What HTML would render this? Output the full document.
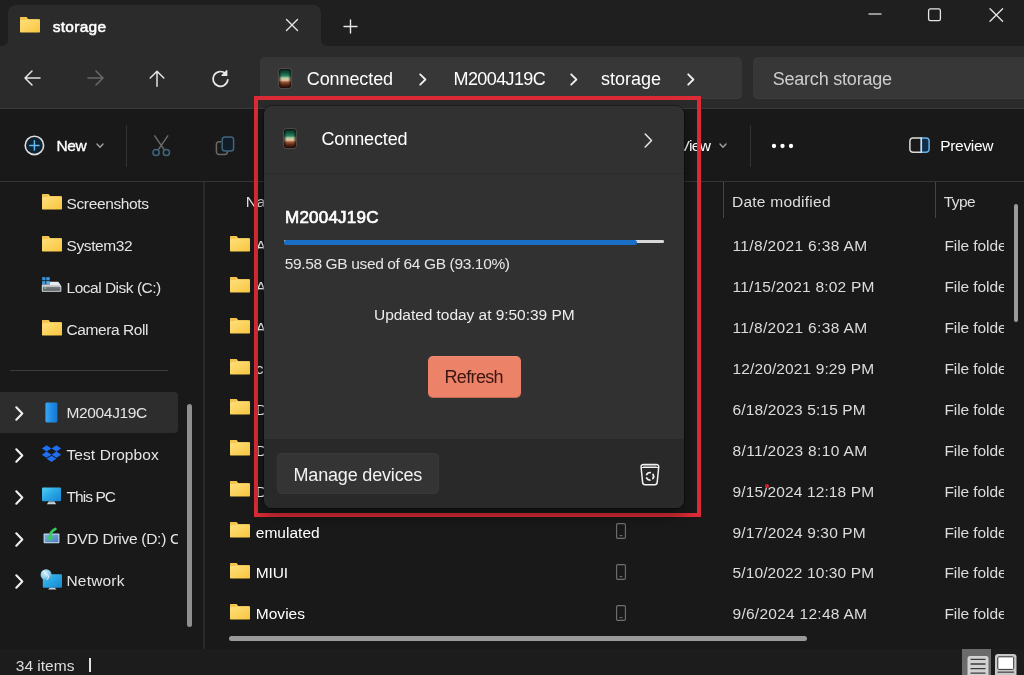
<!DOCTYPE html>
<html lang="en"><head><meta charset="utf-8"><title>storage - File Explorer</title>
<style>
html,body{margin:0;padding:0;background:#191919;}
body{width:1024px;height:675px;overflow:hidden;position:relative;font-family:"Liberation Sans",Arial,sans-serif;}
#w{will-change:transform;position:absolute;left:0;top:0;width:1024px;height:675px;overflow:hidden;background:#191919;}
.t{position:absolute;white-space:nowrap;line-height:24px;height:24px;}
.b{position:absolute;}
.i{position:absolute;overflow:visible;}
</style></head><body><div id="w">

<div class="b" style="left:0;top:0;width:1024px;height:46px;background:#1f1f1f"></div>
<div class="b" style="left:8px;top:5px;width:313px;height:42px;background:#2b2b2b;border-radius:8px 8px 0 0"></div>
<svg class="i" style="left:2px;top:40px" width="6" height="6"><path d="M0 6H6V0A6 6 0 0 1 0 6z" fill="#2b2b2b"/></svg>
<svg class="i" style="left:321px;top:40px" width="6" height="6"><path d="M6 6H0V0A6 6 0 0 0 6 6z" fill="#2b2b2b"/></svg>
<div class="b" style="left:0;top:46px;width:1024px;height:62px;background:#2b2b2b"></div>
<div class="b" style="left:0;top:108px;width:1024px;height:1.8px;background:#3a3a3a"></div>
<div class="b" style="left:0;top:109px;width:1024px;height:72px;background:#191919"></div>
<div class="b" style="left:0;top:180.5px;width:1024px;height:1.6px;background:#353535"></div>
<div class="b" style="left:0;top:649px;width:1024px;height:26px;background:#1c1c1c"></div>
<svg class="i" style="left:19.5px;top:17px" width="20" height="15.6" viewBox="0 0 20 15.6"><defs><linearGradient id="fg1" x1="0" y1="0" x2="1" y2="1"><stop offset="0" stop-color="#ffe07c"/><stop offset="1" stop-color="#f8c53f"/></linearGradient></defs><path d="M1 0h5.4l2 2.2H19a1 1 0 0 1 1 1V6H0V1a1 1 0 0 1 1-1z" fill="#eeb53a"/><rect x="0" y="2.3" width="20" height="13.3" rx="1.2" fill="url(#fg1)"/><path d="M0 3.4V1a1 1 0 0 1 1-1h5.4l1.1 1.2c-.3.7-.9 1.200-1.700 1.200z" fill="#f3c350"/></svg>
<span class="t" style="left:52.8px;top:14.6px;font-size:15.5px;letter-spacing:0.25px;color:#fff;-webkit-text-stroke:0.55px #fff;">storage</span>
<svg class="i" style="left:285px;top:18px" width="14" height="14" viewBox="0 0 14 14"><path d="M1.5 1.5l11 11M12.5 1.5l-11 11" stroke="#e6e6e6" stroke-width="1.4" fill="none" stroke-linecap="round"/></svg>
<svg class="i" style="left:343px;top:19px" width="15" height="15" viewBox="0 0 15 15"><path d="M7.5 1v13M1 7.5h13" stroke="#e6e6e6" stroke-width="1.4" fill="none" stroke-linecap="round"/></svg>
<svg class="i" style="left:868px;top:8px" width="140" height="14" viewBox="0 0 140 14"><path d="M0.5 6h13" stroke="#e6e6e6" stroke-width="1.2" fill="none"/><rect x="60.6" y="0.9" width="11.8" height="11.8" rx="1.8" stroke="#e6e6e6" stroke-width="1.3" fill="none"/><path d="M122 0.7l12.6 12.6M134.6 0.7L122 13.3" stroke="#e6e6e6" stroke-width="1.3" fill="none" stroke-linecap="round"/></svg>
<svg class="i" style="left:20px;top:66px" width="220" height="24" viewBox="0 0 220 24" fill="none" stroke-linecap="round" stroke-linejoin="round" stroke-width="1.5">
<path d="M5 12h15M12 5l-7 7 7 7" stroke="#e4e4e4"/>
<path d="M68 12h15M76 5l7 7-7 7" stroke="#6a6a6a"/>
<path d="M137 5.200v15M130.200 12l6.800-6.800 6.800 6.800" stroke="#e4e4e4"/>
<path d="M205.600 7.600A7.400 7.400 0 1 0 207.800 13.900" stroke="#e8e8e8" stroke-width="1.700"/><path d="M206.800 4.600v4.800h-4.800z" stroke="#e8e8e8" fill="#e8e8e8" stroke-width="1.200"/>
</svg>
<div class="b" style="left:260px;top:57.3px;width:482px;height:42px;background:#373737;border-radius:5px;box-shadow:inset 0 -1px 0 #3c3c3c"></div>
<div class="b" style="left:753px;top:57.3px;width:290px;height:42px;background:#373737;border-radius:5px;box-shadow:inset 0 -1px 0 #3c3c3c"></div>
<svg class="i" style="left:278px;top:68px" width="14" height="21" viewBox="0 0 14 21"><defs><linearGradient id="ph1" x1="0" y1="0" x2="0" y2="1"><stop offset="0" stop-color="#08261c"/><stop offset="0.2" stop-color="#125a43"/><stop offset="0.36" stop-color="#2f8464"/><stop offset="0.47" stop-color="#bcd0a6"/><stop offset="0.6" stop-color="#e6bf9c"/><stop offset="0.7" stop-color="#9a5638"/><stop offset="0.86" stop-color="#542414"/><stop offset="1" stop-color="#2a100a"/></linearGradient><linearGradient id="pv1" x1="0" y1="0" x2="1" y2="0"><stop offset="0" stop-color="#000" stop-opacity=".55"/><stop offset="0.22" stop-color="#000" stop-opacity="0"/><stop offset="0.78" stop-color="#000" stop-opacity="0"/><stop offset="1" stop-color="#000" stop-opacity=".55"/></linearGradient></defs><rect x="0.400" y="0.400" width="13.200" height="20.200" rx="3.300" fill="#150d0a" stroke="#6e655e" stroke-width=".7"/><rect x="1.400" y="1.400" width="11.200" height="18.200" rx="2.500" fill="url(#ph1)"/><rect x="1.400" y="1.400" width="11.200" height="18.200" rx="2.500" fill="url(#pv1)"/></svg>
<span class="t" style="left:306.8px;top:66.8px;font-size:18px;letter-spacing:-0.10px;color:#fff;">Connected</span>
<svg class="i" style="left:419.4px;top:73px" width="8" height="13" viewBox="0 0 8 13"><path d="M1.2 1.3l5.2 5.2L1.2 11.700" stroke="#f0f0f0" stroke-width="1.800" fill="none" stroke-linecap="round" stroke-linejoin="round"/></svg>
<span class="t" style="left:453.5px;top:66.8px;font-size:18px;letter-spacing:-0.60px;color:#fff;">M2004J19C</span>
<svg class="i" style="left:569.6px;top:73px" width="8" height="13" viewBox="0 0 8 13"><path d="M1.2 1.3l5.2 5.2L1.2 11.700" stroke="#f0f0f0" stroke-width="1.800" fill="none" stroke-linecap="round" stroke-linejoin="round"/></svg>
<span class="t" style="left:601.0px;top:66.8px;font-size:18px;letter-spacing:-0.01px;color:#fff;">storage</span>
<svg class="i" style="left:686.6px;top:73px" width="8" height="13" viewBox="0 0 8 13"><path d="M1.2 1.3l5.2 5.2L1.2 11.700" stroke="#f0f0f0" stroke-width="1.800" fill="none" stroke-linecap="round" stroke-linejoin="round"/></svg>
<span class="t" style="left:772.7px;top:66.8px;font-size:18px;letter-spacing:-0.21px;color:#cdcdcd;">Search storage</span>
<svg class="i" style="left:24px;top:135px" width="22" height="22" viewBox="0 0 22 22" fill="none"><circle cx="10.4" cy="10.4" r="9.2" stroke="#dedede" stroke-width="1.600" fill="#0f2433"/><path d="M10.4 5.8v9.2M5.8 10.4h9.2" stroke="#62b8ee" stroke-width="1.5" stroke-linecap="round"/></svg>
<span class="t" style="left:56.5px;top:134.4px;font-size:15.5px;letter-spacing:-0.45px;color:#fff;-webkit-text-stroke:0.35px #fff;">New</span>
<svg class="i" style="left:95.700px;top:143.400px" width="8" height="6" viewBox="0 0 8 6"><path d="M1 1l3 3.200 3-3.200" stroke="#a2a2a2" stroke-width="1.400" fill="none" stroke-linecap="round" stroke-linejoin="round"/></svg>
<div class="b" style="left:125.500px;top:125px;width:1.500px;height:42px;background:#313131"></div>
<svg class="i" style="left:151px;top:135px" width="21" height="23" viewBox="0 0 21 23" fill="none" stroke-width="1.500" stroke-linecap="round"><path d="M3.700 0.900l9.800 14.300M16.800 0.900L7 15.200" stroke="#6a6a6a"/><circle cx="5.100" cy="17.500" r="3.100" stroke="#466579" fill="#101c25"/><circle cx="15.400" cy="17.500" r="3.100" stroke="#466579" fill="#101c25"/></svg>
<svg class="i" style="left:214.500px;top:135.500px" width="20" height="20" viewBox="0 0 20 20" fill="none" stroke-width="1.500"><path d="M6 5.700H4a2.600 2.600 0 0 0-2.600 2.600V15.800A2.600 2.600 0 0 0 4 18.400h5.800a2.600 2.600 0 0 0 2.600-2.600v-.8" stroke="#6a6a6a"/><rect x="7.200" y="1" width="11.400" height="14" rx="2.800" stroke="#41647c" fill="#111e29"/></svg>
<span class="t" style="left:679.5px;top:134.4px;font-size:15.5px;letter-spacing:-0.61px;color:#fff;">View</span>
<svg class="i" style="left:719px;top:143.400px" width="8" height="6" viewBox="0 0 8 6"><path d="M1 1l3 3.200 3-3.200" stroke="#a2a2a2" stroke-width="1.400" fill="none" stroke-linecap="round" stroke-linejoin="round"/></svg>
<div class="b" style="left:749.500px;top:125px;width:1.500px;height:42px;background:#313131"></div>
<svg class="i" style="left:771px;top:143px" width="24" height="6" viewBox="0 0 24 6"><circle cx="3" cy="3" r="2.150" fill="#fff"/><circle cx="11.500" cy="3" r="2.150" fill="#fff"/><circle cx="20" cy="3" r="2.150" fill="#fff"/></svg>
<svg class="i" style="left:908.600px;top:137.200px" width="22" height="17" viewBox="0 0 22 17" fill="none" stroke-width="1.500"><path d="M12.300 0.900H17A3.100 3.100 0 0 1 20.100 4v8.200a3.100 3.100 0 0 1-3.100 3.100h-4.700z" stroke="#6ab2e6" fill="#0f2e4a"/><path d="M12.300 0.900H4A3.100 3.100 0 0 0 0.900 4v8.200A3.100 3.100 0 0 0 4 15.300h8.300z" stroke="#dcdcdc"/></svg>
<span class="t" style="left:940.3px;top:134.4px;font-size:15.5px;letter-spacing:-0.34px;color:#fff;">Preview</span>
<div class="b" style="left:202.6px;top:182px;width:2px;height:467px;background:#2a2a2a"></div>
<div class="b" style="left:10px;top:370px;width:158px;height:1px;background:#3c3c3c"></div>
<div class="b" style="left:0;top:392px;width:178px;height:41px;background:#2d2d2d;border-radius:0 4px 4px 0"></div>
<div class="b" style="left:187px;top:404px;width:5px;height:223px;background:#8f8f8f;border-radius:3px"></div>
<span class="t" style="left:66.5px;top:192.4px;font-size:15.5px;letter-spacing:-0.37px;color:#e4e4e4;">Screenshots</span>
<span class="t" style="left:66.5px;top:234.4px;font-size:15.5px;letter-spacing:-0.40px;color:#e4e4e4;">System32</span>
<span class="t" style="left:66.5px;top:276.4px;font-size:15.5px;letter-spacing:-0.49px;color:#e4e4e4;">Local Disk (C:)</span>
<span class="t" style="left:66.5px;top:318.4px;font-size:15.5px;letter-spacing:-0.41px;color:#e4e4e4;">Camera Roll</span>
<svg class="i" style="left:41.5px;top:194.3px" width="20" height="15.6" viewBox="0 0 20 15.6"><defs><linearGradient id="fg2" x1="0" y1="0" x2="1" y2="1"><stop offset="0" stop-color="#ffe07c"/><stop offset="1" stop-color="#f8c53f"/></linearGradient></defs><path d="M1 0h5.4l2 2.2H19a1 1 0 0 1 1 1V6H0V1a1 1 0 0 1 1-1z" fill="#eeb53a"/><rect x="0" y="2.3" width="20" height="13.3" rx="1.2" fill="url(#fg2)"/><path d="M0 3.4V1a1 1 0 0 1 1-1h5.4l1.1 1.2c-.3.7-.9 1.200-1.700 1.200z" fill="#f3c350"/></svg>
<svg class="i" style="left:41.5px;top:236.3px" width="20" height="15.6" viewBox="0 0 20 15.6"><defs><linearGradient id="fg3" x1="0" y1="0" x2="1" y2="1"><stop offset="0" stop-color="#ffe07c"/><stop offset="1" stop-color="#f8c53f"/></linearGradient></defs><path d="M1 0h5.4l2 2.2H19a1 1 0 0 1 1 1V6H0V1a1 1 0 0 1 1-1z" fill="#eeb53a"/><rect x="0" y="2.3" width="20" height="13.3" rx="1.2" fill="url(#fg3)"/><path d="M0 3.4V1a1 1 0 0 1 1-1h5.4l1.1 1.2c-.3.7-.9 1.200-1.700 1.200z" fill="#f3c350"/></svg>
<svg class="i" style="left:41.5px;top:320.3px" width="20" height="15.6" viewBox="0 0 20 15.6"><defs><linearGradient id="fg4" x1="0" y1="0" x2="1" y2="1"><stop offset="0" stop-color="#ffe07c"/><stop offset="1" stop-color="#f8c53f"/></linearGradient></defs><path d="M1 0h5.4l2 2.2H19a1 1 0 0 1 1 1V6H0V1a1 1 0 0 1 1-1z" fill="#eeb53a"/><rect x="0" y="2.3" width="20" height="13.3" rx="1.2" fill="url(#fg4)"/><path d="M0 3.4V1a1 1 0 0 1 1-1h5.4l1.1 1.2c-.3.7-.9 1.200-1.700 1.200z" fill="#f3c350"/></svg>
<svg class="i" style="left:41px;top:276px" width="22" height="17" viewBox="0 0 22 17"><defs><linearGradient id="dk" x1="0" y1="0" x2="0" y2="1"><stop offset="0" stop-color="#7b8084"/><stop offset="1" stop-color="#5d6265"/></linearGradient></defs><rect x="1.1" y="1.1" width="3.4" height="3.2" fill="#2f8fd8"/><rect x="5.3" y="1.1" width="3.4" height="3.2" fill="#3a9ae0"/><rect x="1.1" y="5.1" width="3.4" height="3.2" fill="#3a9ae0"/><rect x="5.3" y="5.1" width="3.4" height="3.200" fill="#58b0ea"/><path d="M8.700 5.700h8.500l3 4H0.900v-1.200h7.800z" fill="#e9ecee"/><rect x="0.800" y="9.400" width="19.500" height="6.400" rx=".7" fill="#e4e7e9"/><rect x="1.700" y="10.600" width="17.700" height="4.300" fill="url(#dk)"/><rect x="3.400" y="11.500" width="1.700" height="1.100" fill="#7df09a"/></svg>
<span class="t" style="left:66.5px;top:401.4px;font-size:15.5px;letter-spacing:-0.35px;color:#e4e4e4;">M2004J19C</span>
<svg class="i" style="left:15px;top:405.5px" width="9" height="15" viewBox="0 0 9 15"><path d="M1.3 1.3l6 6.2-6 6.2" stroke="#f0f0f0" stroke-width="2.1" fill="none" stroke-linecap="round" stroke-linejoin="round"/></svg>
<span class="t" style="left:66.5px;top:443.4px;font-size:15.5px;letter-spacing:0.08px;color:#e4e4e4;">Test Dropbox</span>
<svg class="i" style="left:15px;top:447.5px" width="9" height="15" viewBox="0 0 9 15"><path d="M1.3 1.3l6 6.2-6 6.2" stroke="#f0f0f0" stroke-width="2.1" fill="none" stroke-linecap="round" stroke-linejoin="round"/></svg>
<span class="t" style="left:66.5px;top:485.4px;font-size:15.5px;letter-spacing:-0.94px;color:#e4e4e4;">This PC</span>
<svg class="i" style="left:15px;top:489.5px" width="9" height="15" viewBox="0 0 9 15"><path d="M1.3 1.3l6 6.2-6 6.2" stroke="#f0f0f0" stroke-width="2.1" fill="none" stroke-linecap="round" stroke-linejoin="round"/></svg>
<span class="t" style="left:66.5px;top:527.4px;font-size:15.5px;letter-spacing:-0.27px;color:#e4e4e4;width:111.5px;overflow:hidden;">DVD Drive (D:) CCCOMA</span>
<svg class="i" style="left:15px;top:531.5px" width="9" height="15" viewBox="0 0 9 15"><path d="M1.3 1.3l6 6.2-6 6.2" stroke="#f0f0f0" stroke-width="2.1" fill="none" stroke-linecap="round" stroke-linejoin="round"/></svg>
<span class="t" style="left:66.5px;top:569.4px;font-size:15.5px;letter-spacing:0.18px;color:#e4e4e4;">Network</span>
<svg class="i" style="left:15px;top:573.5px" width="9" height="15" viewBox="0 0 9 15"><path d="M1.3 1.3l6 6.2-6 6.2" stroke="#f0f0f0" stroke-width="2.1" fill="none" stroke-linecap="round" stroke-linejoin="round"/></svg>
<svg class="i" style="left:45px;top:402px" width="13" height="21" viewBox="0 0 13 21"><defs><linearGradient id="bp" x1="0" y1="0" x2="1" y2="0"><stop offset="0" stop-color="#3aa8f0"/><stop offset="0.5" stop-color="#1e8de6"/><stop offset="1" stop-color="#1877cc"/></linearGradient></defs><rect x="0.4" y="0.4" width="12" height="20" rx="1.4" fill="url(#bp)"/></svg>
<svg class="i" style="left:41px;top:444.8px" width="21" height="19" viewBox="0 0 21 20" fill="#1f6ff0"><path d="M5.3 0.3L0.3 3.6l5 3.3 5.2-3.3zM15.7 0.3l5 3.3-5 3.3-5.2-3.3zM0.3 10.2l5-3.3 5.2 3.3-5.2 3.3zM20.7 10.2l-5-3.3-5.2 3.3 5.2 3.3zM5.4 14.6l5.1-3.3 5.1 3.3-5.1 3.3z"/></svg>
<svg class="i" style="left:42px;top:487px" width="20" height="18" viewBox="0 0 20 18"><defs><linearGradient id="pc" x1="0" y1="0" x2="1" y2="1"><stop offset="0" stop-color="#4fd0f2"/><stop offset="0.5" stop-color="#28a6e4"/><stop offset="1" stop-color="#1b82d2"/></linearGradient></defs><rect x="0" y="0.500" width="19" height="13.800" rx="1" fill="url(#pc)"/><path d="M7 14.300h5l2.300 2.900H4.800z" fill="#c3d3db"/><path d="M7.600 14.300h3.800l.6 1H7z" fill="#5e7886"/></svg>
<svg class="i" style="left:43px;top:528px" width="18" height="17" viewBox="0 0 18 17"><defs><linearGradient id="dv" x1="0" y1="0" x2="1" y2="1"><stop offset="0" stop-color="#7fb0dc"/><stop offset="1" stop-color="#4a7fc0"/></linearGradient></defs><rect x="0.600" y="5.500" width="15.800" height="9.800" rx=".8" fill="#c4d8e6"/><rect x="1.700" y="6.600" width="13.600" height="7.600" fill="url(#dv)"/><path d="M12.400 1C8.400 2.600 6.800 6 7 10.600" stroke="#36cc5e" stroke-width="2.700" fill="none" stroke-linecap="round"/><path d="M3.800 8.400l3.200 4.800 3.600-4.400z" fill="#36cc5e"/></svg>
<svg class="i" style="left:40px;top:568px" width="23" height="22" viewBox="0 0 23 22"><defs><linearGradient id="nw" x1="0" y1="0" x2="1" y2="1"><stop offset="0" stop-color="#48c8ee"/><stop offset="0.5" stop-color="#27a4e2"/><stop offset="1" stop-color="#1a86d0"/></linearGradient><radialGradient id="gl" cx=".4" cy=".35" r=".7"><stop offset="0" stop-color="#d6f0fb"/><stop offset="0.6" stop-color="#8fcdec"/><stop offset="1" stop-color="#4c9fd0"/></radialGradient></defs><rect x="2.800" y="6.200" width="19.200" height="13.500" rx="1" fill="url(#nw)"/><path d="M9.800 19.700h5l1.800 1.800H8z" fill="#c3d3db"/><circle cx="6.100" cy="6.700" r="5.500" fill="url(#gl)"/><path d="M3 3.600c1.800-.2 2.800.8 3.200 2.200.4 1.400 2.200 1.400 2.400 2.800.2 1.200-.8 2.200-1.800 3" stroke="#e9f8ff" stroke-width="1.100" fill="none" opacity=".8"/></svg>
<span class="t" style="left:245.8px;top:189.9px;font-size:15.5px;letter-spacing:-0.35px;color:#dedede;">Name</span>
<div class="b" style="left:723px;top:182px;width:1px;height:36px;background:#444"></div>
<div class="b" style="left:935px;top:182px;width:1px;height:36px;background:#444"></div>
<span class="t" style="left:732.0px;top:189.9px;font-size:15.5px;letter-spacing:0.24px;color:#dedede;">Date modified</span>
<span class="t" style="left:943.7px;top:189.9px;font-size:15.5px;letter-spacing:-0.57px;color:#dedede;">Type</span>
<div class="b" style="left:1014px;top:204px;width:4px;height:118px;background:#9a9a9a;border-radius:2px"></div>
<svg class="i" style="left:230px;top:235.79999999999998px" width="20" height="15.6" viewBox="0 0 20 15.6"><defs><linearGradient id="fg5" x1="0" y1="0" x2="1" y2="1"><stop offset="0" stop-color="#ffe07c"/><stop offset="1" stop-color="#f8c53f"/></linearGradient></defs><path d="M1 0h5.4l2 2.2H19a1 1 0 0 1 1 1V6H0V1a1 1 0 0 1 1-1z" fill="#eeb53a"/><rect x="0" y="2.3" width="20" height="13.3" rx="1.2" fill="url(#fg5)"/><path d="M0 3.4V1a1 1 0 0 1 1-1h5.4l1.1 1.2c-.3.7-.9 1.200-1.700 1.200z" fill="#f3c350"/></svg>
<span class="t" style="left:255.8px;top:234.0px;font-size:15.5px;letter-spacing:-0.35px;color:#fff;">Alarms</span>
<svg class="i" style="left:616px;top:236.6px" width="10" height="16" viewBox="0 0 10 16"><rect x="0.6" y="0.6" width="8.8" height="14.8" rx="1.2" stroke="#707070" stroke-width="1.100" fill="none"/><path d="M3.600 12.600h2.800" stroke="#707070" stroke-width="1.1"/></svg>
<span class="t" style="left:732.5px;top:234.0px;font-size:15.5px;letter-spacing:0.35px;color:#dcdcdc;">11/8/2021 6:38 AM</span>
<span class="t" style="left:944.4px;top:234.0px;font-size:15.5px;letter-spacing:-0.08px;color:#dcdcdc;width:59.7px;overflow:hidden;">File folder</span>
<svg class="i" style="left:230px;top:276.71999999999997px" width="20" height="15.6" viewBox="0 0 20 15.6"><defs><linearGradient id="fg6" x1="0" y1="0" x2="1" y2="1"><stop offset="0" stop-color="#ffe07c"/><stop offset="1" stop-color="#f8c53f"/></linearGradient></defs><path d="M1 0h5.4l2 2.2H19a1 1 0 0 1 1 1V6H0V1a1 1 0 0 1 1-1z" fill="#eeb53a"/><rect x="0" y="2.3" width="20" height="13.3" rx="1.2" fill="url(#fg6)"/><path d="M0 3.4V1a1 1 0 0 1 1-1h5.4l1.1 1.2c-.3.7-.9 1.200-1.700 1.200z" fill="#f3c350"/></svg>
<span class="t" style="left:255.8px;top:274.9px;font-size:15.5px;letter-spacing:-0.35px;color:#fff;">Android</span>
<svg class="i" style="left:616px;top:277.52px" width="10" height="16" viewBox="0 0 10 16"><rect x="0.6" y="0.6" width="8.8" height="14.8" rx="1.2" stroke="#707070" stroke-width="1.100" fill="none"/><path d="M3.600 12.600h2.800" stroke="#707070" stroke-width="1.1"/></svg>
<span class="t" style="left:732.5px;top:274.9px;font-size:15.5px;letter-spacing:0.20px;color:#dcdcdc;">11/15/2021 8:02 PM</span>
<span class="t" style="left:944.4px;top:274.9px;font-size:15.5px;letter-spacing:-0.08px;color:#dcdcdc;width:59.7px;overflow:hidden;">File folder</span>
<svg class="i" style="left:230px;top:317.64px" width="20" height="15.6" viewBox="0 0 20 15.6"><defs><linearGradient id="fg7" x1="0" y1="0" x2="1" y2="1"><stop offset="0" stop-color="#ffe07c"/><stop offset="1" stop-color="#f8c53f"/></linearGradient></defs><path d="M1 0h5.4l2 2.2H19a1 1 0 0 1 1 1V6H0V1a1 1 0 0 1 1-1z" fill="#eeb53a"/><rect x="0" y="2.3" width="20" height="13.3" rx="1.2" fill="url(#fg7)"/><path d="M0 3.4V1a1 1 0 0 1 1-1h5.4l1.1 1.2c-.3.7-.9 1.200-1.700 1.200z" fill="#f3c350"/></svg>
<span class="t" style="left:255.8px;top:315.9px;font-size:15.5px;letter-spacing:-0.35px;color:#fff;">Audiobooks</span>
<svg class="i" style="left:616px;top:318.44px" width="10" height="16" viewBox="0 0 10 16"><rect x="0.6" y="0.6" width="8.8" height="14.8" rx="1.2" stroke="#707070" stroke-width="1.100" fill="none"/><path d="M3.600 12.600h2.800" stroke="#707070" stroke-width="1.1"/></svg>
<span class="t" style="left:732.5px;top:315.9px;font-size:15.5px;letter-spacing:0.35px;color:#dcdcdc;">11/8/2021 6:38 AM</span>
<span class="t" style="left:944.4px;top:315.9px;font-size:15.5px;letter-spacing:-0.08px;color:#dcdcdc;width:59.7px;overflow:hidden;">File folder</span>
<svg class="i" style="left:230px;top:358.56px" width="20" height="15.6" viewBox="0 0 20 15.6"><defs><linearGradient id="fg8" x1="0" y1="0" x2="1" y2="1"><stop offset="0" stop-color="#ffe07c"/><stop offset="1" stop-color="#f8c53f"/></linearGradient></defs><path d="M1 0h5.4l2 2.2H19a1 1 0 0 1 1 1V6H0V1a1 1 0 0 1 1-1z" fill="#eeb53a"/><rect x="0" y="2.3" width="20" height="13.3" rx="1.2" fill="url(#fg8)"/><path d="M0 3.4V1a1 1 0 0 1 1-1h5.4l1.1 1.2c-.3.7-.9 1.200-1.700 1.200z" fill="#f3c350"/></svg>
<span class="t" style="left:255.8px;top:356.8px;font-size:15.5px;letter-spacing:-0.35px;color:#fff;">com.xiaomi</span>
<svg class="i" style="left:616px;top:359.36px" width="10" height="16" viewBox="0 0 10 16"><rect x="0.6" y="0.6" width="8.8" height="14.8" rx="1.2" stroke="#707070" stroke-width="1.100" fill="none"/><path d="M3.600 12.600h2.800" stroke="#707070" stroke-width="1.1"/></svg>
<span class="t" style="left:732.5px;top:356.8px;font-size:15.5px;letter-spacing:0.12px;color:#dcdcdc;">12/20/2021 9:29 PM</span>
<span class="t" style="left:944.4px;top:356.8px;font-size:15.5px;letter-spacing:-0.08px;color:#dcdcdc;width:59.7px;overflow:hidden;">File folder</span>
<svg class="i" style="left:230px;top:399.47999999999996px" width="20" height="15.6" viewBox="0 0 20 15.6"><defs><linearGradient id="fg9" x1="0" y1="0" x2="1" y2="1"><stop offset="0" stop-color="#ffe07c"/><stop offset="1" stop-color="#f8c53f"/></linearGradient></defs><path d="M1 0h5.4l2 2.2H19a1 1 0 0 1 1 1V6H0V1a1 1 0 0 1 1-1z" fill="#eeb53a"/><rect x="0" y="2.3" width="20" height="13.3" rx="1.2" fill="url(#fg9)"/><path d="M0 3.4V1a1 1 0 0 1 1-1h5.4l1.1 1.2c-.3.7-.9 1.200-1.700 1.200z" fill="#f3c350"/></svg>
<span class="t" style="left:255.8px;top:397.7px;font-size:15.5px;letter-spacing:-0.35px;color:#fff;">DCIM</span>
<svg class="i" style="left:616px;top:400.28px" width="10" height="16" viewBox="0 0 10 16"><rect x="0.6" y="0.6" width="8.8" height="14.8" rx="1.2" stroke="#707070" stroke-width="1.100" fill="none"/><path d="M3.600 12.600h2.800" stroke="#707070" stroke-width="1.1"/></svg>
<span class="t" style="left:732.5px;top:397.7px;font-size:15.5px;letter-spacing:0.14px;color:#dcdcdc;">6/18/2023 5:15 PM</span>
<span class="t" style="left:944.4px;top:397.7px;font-size:15.5px;letter-spacing:-0.08px;color:#dcdcdc;width:59.7px;overflow:hidden;">File folder</span>
<svg class="i" style="left:230px;top:440.40000000000003px" width="20" height="15.6" viewBox="0 0 20 15.6"><defs><linearGradient id="fg10" x1="0" y1="0" x2="1" y2="1"><stop offset="0" stop-color="#ffe07c"/><stop offset="1" stop-color="#f8c53f"/></linearGradient></defs><path d="M1 0h5.4l2 2.2H19a1 1 0 0 1 1 1V6H0V1a1 1 0 0 1 1-1z" fill="#eeb53a"/><rect x="0" y="2.3" width="20" height="13.3" rx="1.2" fill="url(#fg10)"/><path d="M0 3.4V1a1 1 0 0 1 1-1h5.4l1.1 1.2c-.3.7-.9 1.200-1.700 1.200z" fill="#f3c350"/></svg>
<span class="t" style="left:255.8px;top:438.6px;font-size:15.5px;letter-spacing:-0.35px;color:#fff;">Documents</span>
<svg class="i" style="left:616px;top:441.20000000000005px" width="10" height="16" viewBox="0 0 10 16"><rect x="0.6" y="0.6" width="8.8" height="14.8" rx="1.2" stroke="#707070" stroke-width="1.100" fill="none"/><path d="M3.600 12.600h2.800" stroke="#707070" stroke-width="1.1"/></svg>
<span class="t" style="left:732.5px;top:438.6px;font-size:15.5px;letter-spacing:0.35px;color:#dcdcdc;">8/11/2023 8:10 AM</span>
<span class="t" style="left:944.4px;top:438.6px;font-size:15.5px;letter-spacing:-0.08px;color:#dcdcdc;width:59.7px;overflow:hidden;">File folder</span>
<svg class="i" style="left:230px;top:481.32px" width="20" height="15.6" viewBox="0 0 20 15.6"><defs><linearGradient id="fg11" x1="0" y1="0" x2="1" y2="1"><stop offset="0" stop-color="#ffe07c"/><stop offset="1" stop-color="#f8c53f"/></linearGradient></defs><path d="M1 0h5.4l2 2.2H19a1 1 0 0 1 1 1V6H0V1a1 1 0 0 1 1-1z" fill="#eeb53a"/><rect x="0" y="2.3" width="20" height="13.3" rx="1.2" fill="url(#fg11)"/><path d="M0 3.4V1a1 1 0 0 1 1-1h5.4l1.1 1.2c-.3.7-.9 1.200-1.700 1.200z" fill="#f3c350"/></svg>
<span class="t" style="left:255.8px;top:479.5px;font-size:15.5px;letter-spacing:-0.35px;color:#fff;">Download</span>
<svg class="i" style="left:616px;top:482.12px" width="10" height="16" viewBox="0 0 10 16"><rect x="0.6" y="0.6" width="8.8" height="14.8" rx="1.2" stroke="#707070" stroke-width="1.100" fill="none"/><path d="M3.600 12.600h2.800" stroke="#707070" stroke-width="1.1"/></svg>
<span class="t" style="left:732.5px;top:479.5px;font-size:15.5px;letter-spacing:0.12px;color:#dcdcdc;">9/15/2024 12:18 PM</span>
<span class="t" style="left:944.4px;top:479.5px;font-size:15.5px;letter-spacing:-0.08px;color:#dcdcdc;width:59.7px;overflow:hidden;">File folder</span>
<svg class="i" style="left:230px;top:522.24px" width="20" height="15.6" viewBox="0 0 20 15.6"><defs><linearGradient id="fg12" x1="0" y1="0" x2="1" y2="1"><stop offset="0" stop-color="#ffe07c"/><stop offset="1" stop-color="#f8c53f"/></linearGradient></defs><path d="M1 0h5.4l2 2.2H19a1 1 0 0 1 1 1V6H0V1a1 1 0 0 1 1-1z" fill="#eeb53a"/><rect x="0" y="2.3" width="20" height="13.3" rx="1.2" fill="url(#fg12)"/><path d="M0 3.4V1a1 1 0 0 1 1-1h5.4l1.1 1.2c-.3.7-.9 1.200-1.700 1.200z" fill="#f3c350"/></svg>
<span class="t" style="left:255.8px;top:520.5px;font-size:15.5px;letter-spacing:0.01px;color:#fff;">emulated</span>
<svg class="i" style="left:616px;top:523.04px" width="10" height="16" viewBox="0 0 10 16"><rect x="0.6" y="0.6" width="8.8" height="14.8" rx="1.2" stroke="#707070" stroke-width="1.100" fill="none"/><path d="M3.600 12.600h2.800" stroke="#707070" stroke-width="1.1"/></svg>
<span class="t" style="left:732.5px;top:520.5px;font-size:15.5px;letter-spacing:0.14px;color:#dcdcdc;">9/17/2024 9:30 PM</span>
<span class="t" style="left:944.4px;top:520.5px;font-size:15.5px;letter-spacing:-0.08px;color:#dcdcdc;width:59.7px;overflow:hidden;">File folder</span>
<svg class="i" style="left:230px;top:563.1600000000001px" width="20" height="15.6" viewBox="0 0 20 15.6"><defs><linearGradient id="fg13" x1="0" y1="0" x2="1" y2="1"><stop offset="0" stop-color="#ffe07c"/><stop offset="1" stop-color="#f8c53f"/></linearGradient></defs><path d="M1 0h5.4l2 2.2H19a1 1 0 0 1 1 1V6H0V1a1 1 0 0 1 1-1z" fill="#eeb53a"/><rect x="0" y="2.3" width="20" height="13.3" rx="1.2" fill="url(#fg13)"/><path d="M0 3.4V1a1 1 0 0 1 1-1h5.4l1.1 1.2c-.3.7-.9 1.200-1.700 1.200z" fill="#f3c350"/></svg>
<span class="t" style="left:255.8px;top:561.4px;font-size:15.5px;letter-spacing:-0.17px;color:#fff;">MIUI</span>
<svg class="i" style="left:616px;top:563.96px" width="10" height="16" viewBox="0 0 10 16"><rect x="0.6" y="0.6" width="8.8" height="14.8" rx="1.2" stroke="#707070" stroke-width="1.100" fill="none"/><path d="M3.600 12.600h2.800" stroke="#707070" stroke-width="1.1"/></svg>
<span class="t" style="left:732.5px;top:561.4px;font-size:15.5px;letter-spacing:0.12px;color:#dcdcdc;">5/10/2022 10:30 PM</span>
<span class="t" style="left:944.4px;top:561.4px;font-size:15.5px;letter-spacing:-0.08px;color:#dcdcdc;width:59.7px;overflow:hidden;">File folder</span>
<svg class="i" style="left:230px;top:604.08px" width="20" height="15.6" viewBox="0 0 20 15.6"><defs><linearGradient id="fg14" x1="0" y1="0" x2="1" y2="1"><stop offset="0" stop-color="#ffe07c"/><stop offset="1" stop-color="#f8c53f"/></linearGradient></defs><path d="M1 0h5.4l2 2.2H19a1 1 0 0 1 1 1V6H0V1a1 1 0 0 1 1-1z" fill="#eeb53a"/><rect x="0" y="2.3" width="20" height="13.3" rx="1.2" fill="url(#fg14)"/><path d="M0 3.4V1a1 1 0 0 1 1-1h5.4l1.1 1.2c-.3.7-.9 1.200-1.700 1.200z" fill="#f3c350"/></svg>
<span class="t" style="left:255.8px;top:602.3px;font-size:15.5px;letter-spacing:0.02px;color:#fff;">Movies</span>
<svg class="i" style="left:616px;top:604.88px" width="10" height="16" viewBox="0 0 10 16"><rect x="0.6" y="0.6" width="8.8" height="14.8" rx="1.2" stroke="#707070" stroke-width="1.100" fill="none"/><path d="M3.600 12.600h2.800" stroke="#707070" stroke-width="1.1"/></svg>
<span class="t" style="left:732.5px;top:602.3px;font-size:15.5px;letter-spacing:0.27px;color:#dcdcdc;">9/6/2024 12:48 AM</span>
<span class="t" style="left:944.4px;top:602.3px;font-size:15.5px;letter-spacing:-0.08px;color:#dcdcdc;width:59.7px;overflow:hidden;">File folder</span>
<div class="b" style="left:229px;top:636px;width:578px;height:5px;background:#9a9a9a;border-radius:3px"></div>
<span class="t" style="left:15.8px;top:653.9px;font-size:15.5px;letter-spacing:0.00px;color:#dedede;">34 items</span>
<div class="b" style="left:89px;top:658px;width:1.5px;height:14px;background:#e0e0e0"></div>
<div class="b" style="left:962px;top:649px;width:29px;height:26px;background:#6b6b6b"></div>
<svg class="i" style="left:967px;top:656px" width="22" height="19" viewBox="0 0 22 19"><rect x="0.5" y="0" width="21" height="24" rx="2.5" fill="#d2d2d2"/><path d="M3.5 3.4h15M3.5 8h15M3.5 12.6h15M3.5 17.1h15" stroke="#3c3c3c" stroke-width="1.3"/></svg>
<svg class="i" style="left:995px;top:654px" width="22" height="21" viewBox="0 0 22 21"><rect x="0" y="0" width="21.5" height="24" rx="3" fill="#c8c8c8"/><rect x="2.8" y="2.8" width="15.9" height="12.6" rx="1" fill="#fff" stroke="#333" stroke-width="1"/><path d="M2.5 18.2h16.5" stroke="#555" stroke-width="1.4"/></svg>
<div class="b" style="left:253.700px;top:95.700px;width:439.400px;height:413.300px;border:4.700px solid #dc2b36;box-sizing:content-box"></div>
<div class="b" style="left:764.6px;top:483.6px;width:4.6px;height:4.6px;border-radius:2px 2.4px 2px 2px;background:#d3202c"></div>
<div class="b" style="left:263.6px;top:105.5px;width:420.2px;height:402px;border-radius:8px;background:#313131;box-shadow:0 0 0 1px rgba(0,0,0,.28),0 6px 14px 1px rgba(0,0,0,.4);overflow:hidden"><div class="b" style="left:0;top:67px;width:100%;height:1px;background:#2b2b2b"></div><div class="b" style="left:0;top:333px;width:100%;height:70px;background:#292929"></div></div>
<svg class="i" style="left:283px;top:128px" width="14" height="21" viewBox="0 0 14 21"><defs><linearGradient id="ph2" x1="0" y1="0" x2="0" y2="1"><stop offset="0" stop-color="#08261c"/><stop offset="0.2" stop-color="#125a43"/><stop offset="0.36" stop-color="#2f8464"/><stop offset="0.47" stop-color="#bcd0a6"/><stop offset="0.6" stop-color="#e6bf9c"/><stop offset="0.7" stop-color="#9a5638"/><stop offset="0.86" stop-color="#542414"/><stop offset="1" stop-color="#2a100a"/></linearGradient><linearGradient id="pv2" x1="0" y1="0" x2="1" y2="0"><stop offset="0" stop-color="#000" stop-opacity=".55"/><stop offset="0.22" stop-color="#000" stop-opacity="0"/><stop offset="0.78" stop-color="#000" stop-opacity="0"/><stop offset="1" stop-color="#000" stop-opacity=".55"/></linearGradient></defs><rect x="0.400" y="0.400" width="13.200" height="20.200" rx="3.300" fill="#150d0a" stroke="#6e655e" stroke-width=".7"/><rect x="1.400" y="1.400" width="11.200" height="18.200" rx="2.500" fill="url(#ph2)"/><rect x="1.400" y="1.400" width="11.200" height="18.200" rx="2.500" fill="url(#pv2)"/></svg>
<span class="t" style="left:321.5px;top:127.1px;font-size:18px;letter-spacing:-0.13px;color:#fff;">Connected</span>
<svg class="i" style="left:644px;top:133px" width="9" height="15" viewBox="0 0 9 15"><path d="M1.2 1l6.3 6.5L1.2 14" stroke="#e8e8e8" stroke-width="1.5" fill="none" stroke-linecap="round" stroke-linejoin="round"/></svg>
<span class="t" style="left:285.0px;top:205.5px;font-size:17px;letter-spacing:0.22px;color:#fff;-webkit-text-stroke:0.7px #fff;">M2004J19C</span>
<div class="b" style="left:284px;top:240.4px;width:380px;height:2.4px;border-radius:1.2px;background:#d8d8d8"></div>
<div class="b" style="left:284px;top:239.5px;width:352.8px;height:5px;background:#196fc6;border-radius:2.5px"></div>
<span class="t" style="left:284.7px;top:252.0px;font-size:15.5px;letter-spacing:-0.36px;color:#e6e6e6;">59.58 GB used of 64 GB (93.10%)</span>
<span class="t" style="left:374.0px;top:302.6px;font-size:15.5px;letter-spacing:-0.04px;color:#ededed;">Updated today at 9:50:39 PM</span>
<div class="b" style="left:428px;top:356px;width:92.5px;height:42px;background:#ec8268;border-radius:5px;box-shadow:inset 0 -1px 0 rgba(0,0,0,.18),inset 0 1px 0 rgba(255,255,255,.08)"></div>
<span class="t" style="left:444.5px;top:364.5px;font-size:18px;letter-spacing:-0.65px;color:#3a1511;">Refresh</span>
<div class="b" style="left:277px;top:452.6px;width:162px;height:41.6px;background:#343434;border-radius:5px;box-shadow:inset 0 0 0 1px #383838,inset 0 1px 0 #3e3e3e"></div>
<span class="t" style="left:293.5px;top:462.6px;font-size:18px;letter-spacing:-0.17px;color:#f2f2f2;">Manage devices</span>
<svg class="i" style="left:640px;top:463px" width="20" height="23" viewBox="0 0 20 23" fill="none" stroke="#f2f2f2" stroke-linecap="round" stroke-linejoin="round"><path d="M3.600 2.200H16.200L16.800 3.900H3z" fill="#8a8a8a" stroke="none"/><path d="M3.600 1.500H16.200Q19 1.500 18.700 4.200L17.200 19.400Q17 21.700 14.700 21.700H5.100Q2.800 21.700 2.600 19.400L1.100 4.200Q0.800 1.500 3.600 1.500Z" stroke-width="1.500"/><path d="M1.800 4.500H18" stroke-width="1.100"/><path d="M6.70 11.55A3.7 3.7 0 0 1 10.22 9.71M13.10 11.55A3.7 3.7 0 0 1 12.93 15.52M9.90 17.10A3.7 3.7 0 0 1 6.55 14.96" stroke-width="1.800"/></svg>
</div></body></html>
